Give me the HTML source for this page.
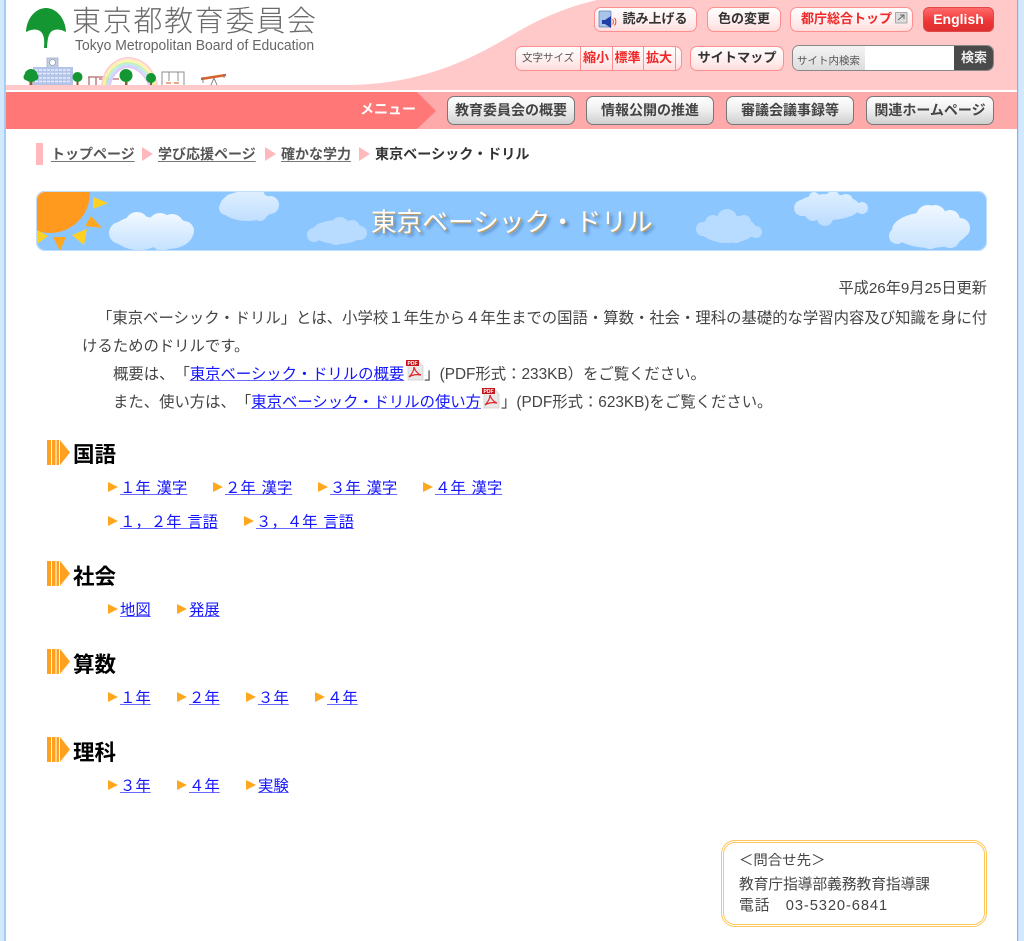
<!DOCTYPE html>
<html lang="ja"><head><meta charset="utf-8"><title>東京ベーシック・ドリル</title>
<style>
html,body{margin:0;padding:0;background:#fff}
body{width:1024px;height:941px;position:relative;overflow:hidden;font-family:"Liberation Sans","Noto Sans CJK JP",sans-serif;color:#444;text-spacing-trim:space-all}
.a{position:absolute}
.t{position:absolute;white-space:nowrap;line-height:1}
.b{position:absolute;box-sizing:border-box;border:1px solid #ff8f8f;border-radius:7px;background:linear-gradient(#fff,#ffeaea 70%,#ffdcdc);text-align:center;font-weight:bold;font-size:13px;line-height:21px;color:#333;white-space:nowrap}
.n{position:absolute;top:96px;height:29px;box-sizing:border-box;border:1px solid #777;border-radius:7px;background:linear-gradient(#fff,#eee 50%,#cfcfcf);text-align:center;font-weight:bold;font-size:14px;line-height:27px;color:#444;white-space:nowrap}
a{color:#1414ff;text-decoration:underline;text-decoration-color:#6a6aff}
.l{position:absolute;white-space:nowrap;line-height:1;font-size:15.36px;word-spacing:1.5px}
.tri{position:absolute;width:0;height:0;border-left:10px solid #ffa81f;border-top:5.5px solid transparent;border-bottom:5.5px solid transparent}
.crumb{position:absolute;top:147px;width:0;height:0;border-left:11px solid #ffb9bd;border-top:7.5px solid transparent;border-bottom:7.5px solid transparent}
.c{position:absolute;top:147px;font-size:14px;font-weight:bold;line-height:1;color:#555;white-space:nowrap;text-decoration:underline;text-decoration-color:#777;text-underline-offset:2px}
.h{position:absolute;left:73px;font-size:21.5px;font-weight:bold;line-height:1;color:#000;white-space:nowrap}
</style></head><body>

<svg class="a" style="left:0;top:0" width="1024" height="941" viewBox="0 0 1024 941">
<rect x="0" y="0" width="5" height="941" fill="#d2e8fc"/><rect x="4.5" y="0" width="1.2" height="941" fill="#7fb4ea"/>
<rect x="1018" y="0" width="6" height="941" fill="#d2e8fc"/><rect x="1017" y="0" width="1.2" height="941" fill="#7fb4ea"/>
<path d="M6 85H345C420 85 470 60 512 35C545 15 575 5 597 0H1017V90H6Z" fill="#ffc9c9"/>
<rect x="6" y="92" width="1011" height="37" fill="#ffaaaa"/>
<path d="M6 92H417L436 111L417 129H6Z" fill="#ff7777"/>
<!-- logo -->
<path d="M44 48C44.800 40 44 34 40 31C35 28 30 30 26 32C26.500 18 36 8 46 8C56 8 65.500 18 66 32C62 30 57 28 52 31C48 34 47.500 40 47 48Z" fill="#149632"/>
<!-- school -->
<g>
<rect x="47" y="58" width="11" height="10" fill="#c4cfe6" stroke="#99a7c8" stroke-width=".7"/><circle cx="52.500" cy="62.500" r="3" fill="#fff" stroke="#889" stroke-width=".6"/>
<rect x="33" y="67" width="40" height="18" fill="#b4c4e8"/>
<path d="M35 70h36M35 73.500h36M35 78h36M35 81.500h36" stroke="#e8eefa" stroke-width="1.500" stroke-dasharray="3 1"/>
<rect x="29.500" y="78" width="3" height="7" fill="#8a5a3a"/><circle cx="31" cy="75.500" r="6.500" fill="#149632"/><circle cx="27" cy="77" r="3.500" fill="#149632"/><circle cx="35" cy="77" r="3.500" fill="#149632"/>
<rect x="76.500" y="80" width="2" height="5" fill="#8a5a3a"/><circle cx="77.500" cy="77" r="5" fill="#149632"/>
<path d="M88 77h20M89 77v8M96 77v8M99 79h20M108 77v8" stroke="#b56a6a" stroke-width="1.300" fill="none"/>
<path d="M102 85C104 66 118 58 128 58C140 58 153 66 157 85" fill="none" stroke="#ffd0d0" stroke-width="2"/>
<path d="M104 85C106 68 118 60.500 128 60.500C139 60.500 151 68 155 85" fill="none" stroke="#fff3a0" stroke-width="2"/>
<path d="M106 85C108 70 119 63 128 63C138 63 149 70 153 85" fill="none" stroke="#c9f0b0" stroke-width="2"/>
<path d="M108 85C110 72 120 65 128 65C137 65 147 72 151 85" fill="none" stroke="#bfe0ff" stroke-width="2"/>
<path d="M110 85C112 74 120 67 128 67C136 67 145 74 149 85" fill="none" stroke="#e4c8f4" stroke-width="2"/>
<rect x="125" y="78" width="2.500" height="7" fill="#8a5a3a"/><circle cx="126" cy="75.500" r="6.500" fill="#149632"/>
<rect x="150" y="80" width="2" height="5" fill="#8a5a3a"/><circle cx="151" cy="78" r="5" fill="#149632"/>
<path d="M162 85V72H184V85M162 72h22M169 72v9M178 72v9" fill="none" stroke="#8c8c8c" stroke-width="1"/>
<path d="M166 83h5M174 83h5" stroke="#e07040" stroke-width="1.200"/>
<path d="M201 79L226 75" stroke="#d8622a" stroke-width="2.500"/><path d="M211 85L214 78L217 85M203 77v6M224 74v4" stroke="#777" stroke-width=".9" fill="none"/>
</g>
<!-- banner -->
<defs>
<clipPath id="bc"><rect x="36" y="191" width="951" height="60" rx="9"/></clipPath>
<linearGradient id="g1" gradientUnits="userSpaceOnUse" x1="0" y1="212" x2="0" y2="251"><stop offset="0" stop-color="#f2f9ff"/><stop offset="1" stop-color="#c4e1ff"/></linearGradient>
<linearGradient id="g2" gradientUnits="userSpaceOnUse" x1="0" y1="191" x2="0" y2="225"><stop offset="0" stop-color="#dff0ff"/><stop offset="1" stop-color="#bcdcff"/></linearGradient>
<linearGradient id="g6" gradientUnits="userSpaceOnUse" x1="0" y1="205" x2="0" y2="249"><stop offset="0" stop-color="#f0f8ff"/><stop offset="1" stop-color="#c8e3ff"/></linearGradient>
</defs>
<rect x="36" y="191" width="951" height="60" rx="9" fill="#8cc6ff"/>
<g clip-path="url(#bc)">
<circle cx="50" cy="193" r="40" fill="#ff9a1f"/>
<path d="M93 197L108 203L93 209Z" fill="#ffd01f"/>
<path d="M91 216L102 228L85 226Z" fill="#ffa81f"/>
<path d="M87 229L84 245L72 235Z" fill="#ffd01f"/>
<path d="M53 237H66L60 251Z" fill="#ffa81f"/>
<path d="M37 230L48 236L37 244Z" fill="#ffd01f"/>
<g fill="url(#g1)"><ellipse cx="139" cy="233" rx="27" ry="17"/><ellipse cx="168" cy="233" rx="25" ry="16"/><circle cx="137" cy="224" r="12"/><circle cx="160" cy="225" r="12"/><circle cx="172" cy="226" r="12"/><circle cx="120" cy="233" r="11"/><circle cx="184" cy="231" r="10"/><circle cx="138" cy="240" r="11"/><circle cx="162" cy="241" r="10"/></g>
<g fill="url(#g2)"><ellipse cx="247" cy="206" rx="27" ry="15"/><circle cx="226" cy="208" r="7"/><circle cx="231" cy="200" r="6"/><circle cx="241" cy="199" r="8"/><circle cx="256" cy="197" r="9"/><circle cx="270" cy="205" r="9"/><circle cx="260" cy="214" r="7"/><circle cx="243" cy="212" r="8"/></g>
<g fill="#b8dcff"><ellipse cx="338" cy="232" rx="26" ry="12"/><circle cx="314" cy="235" r="7"/><circle cx="321" cy="229" r="6"/><circle cx="340" cy="226" r="9"/><circle cx="352" cy="228" r="8"/><circle cx="360" cy="233" r="7"/><circle cx="336" cy="238" r="7"/></g>
<g fill="#b8dcff"><ellipse cx="728" cy="229" rx="28" ry="14"/><circle cx="703" cy="229" r="7"/><circle cx="713" cy="223" r="8"/><circle cx="727" cy="219" r="10"/><circle cx="744" cy="222" r="7"/><circle cx="756" cy="232" r="6"/><circle cx="722" cy="235" r="8"/><circle cx="736" cy="236" r="7"/></g>
<g fill="url(#g2)"><ellipse cx="828" cy="207" rx="32" ry="13"/><circle cx="802" cy="208" r="8"/><circle cx="814" cy="197" r="5"/><circle cx="833" cy="198" r="7"/><circle cx="846" cy="201" r="7"/><circle cx="862" cy="208" r="6"/><circle cx="825" cy="218" r="8"/><circle cx="813" cy="213" r="8"/></g>
<g fill="url(#g6)"><ellipse cx="930" cy="230" rx="38" ry="18"/><circle cx="928" cy="217" r="12"/><circle cx="935" cy="216" r="11"/><circle cx="950" cy="220" r="10"/><circle cx="960" cy="228" r="10"/><circle cx="897" cy="236" r="8"/><circle cx="910" cy="230" r="11"/><circle cx="930" cy="239" r="10"/><circle cx="950" cy="238" r="10"/></g>
</g>
<rect x="36.500" y="191.500" width="950" height="59" rx="9" fill="none" stroke="#c0deff" stroke-width="1"/>
<!-- heading marks -->
<g fill="#ffa020">
<path d="M47 440h4v25h-4zM52 440h3.500v25h-3.500zM56.500 440h2.500v25h-2.500zM60 440l10 12.500l-10 12.500z"/>
<path d="M47 561h4v25h-4zM52 561h3.500v25h-3.500zM56.500 561h2.500v25h-2.500zM60 561l10 12.500l-10 12.500z"/>
<path d="M47 649h4v25h-4zM52 649h3.500v25h-3.500zM56.500 649h2.500v25h-2.500zM60 649l10 12.500l-10 12.500z"/>
<path d="M47 737h4v25h-4zM52 737h3.500v25h-3.500zM56.500 737h2.500v25h-2.500zM60 737l10 12.500l-10 12.500z"/>
</g>
<!-- pdf icons -->
<g><path d="M408 361h10l5 5v14h-15z" fill="#e8e8e8" stroke="#ccc" stroke-width=".7"/><rect x="406" y="360" width="13" height="6" fill="#c4161c"/><text x="407.500" y="365" font-size="5" font-weight="bold" fill="#fff" font-family="Liberation Sans">PDF</text><path d="M414 367c0 4-2 7-5 10c3-2 7-3 12-2c-3-1-6-4-7-8z" fill="none" stroke="#e0242a" stroke-width="1.200"/></g>
<g><path d="M484 389h10l5 5v14h-15z" fill="#e8e8e8" stroke="#ccc" stroke-width=".7"/><rect x="482" y="388" width="13" height="6" fill="#c4161c"/><text x="483.500" y="393" font-size="5" font-weight="bold" fill="#fff" font-family="Liberation Sans">PDF</text><path d="M490 395c0 4-2 7-5 10c3-2 7-3 12-2c-3-1-6-4-7-8z" fill="none" stroke="#e0242a" stroke-width="1.200"/></g>
</svg>

<div class="t" style="left:72px;top:8px;font-size:29px;letter-spacing:1.700px;color:#6a6a6a;font-weight:300">東京都教育委員会</div>
<div class="t" style="left:75px;top:39px;font-size:14.500px;color:#666;transform:scaleX(.96);transform-origin:left center">Tokyo Metropolitan Board of Education</div>

<div class="b" style="left:594px;top:7px;width:103px;height:25px;padding-left:19px">読み上げる</div>
<div class="b" style="left:707px;top:7px;width:74px;height:25px">色の変更</div>
<div class="b" style="left:790px;top:7px;width:123px;height:25px;color:#f02828;text-align:left;padding-left:10px">都庁総合トップ</div>
<div class="a" style="left:923px;top:7px;width:71px;height:25px;border-radius:6px;background:linear-gradient(#ff6a6a,#ee3434 60%,#dd3030);color:#fff;font-weight:bold;font-size:14px;line-height:22px;text-align:center;box-sizing:border-box;border:1px solid #e04848">English</div>

<div class="b" style="left:515px;top:46px;width:167px;height:25px"></div>
<div class="a" style="left:580px;top:47px;width:1px;height:23px;background:#ff8f8f"></div>
<div class="a" style="left:612px;top:47px;width:1px;height:23px;background:#ff8f8f"></div>
<div class="a" style="left:643px;top:47px;width:1px;height:23px;background:#ff8f8f"></div>
<div class="a" style="left:675px;top:47px;width:1px;height:23px;background:#ff8f8f"></div>
<div class="t" style="left:522px;top:53px;font-size:10.500px;color:#555">文字サイズ</div>
<div class="t" style="left:583px;top:51px;font-size:13px;font-weight:bold;color:#f02828">縮小</div>
<div class="t" style="left:614.500px;top:51px;font-size:13px;font-weight:bold;color:#f02828">標準</div>
<div class="t" style="left:646px;top:51px;font-size:13px;font-weight:bold;color:#f02828">拡大</div>
<div class="b" style="left:690px;top:46px;width:94px;height:25px;font-size:13.200px">サイトマップ</div>
<div class="a" style="left:792px;top:45px;width:202px;height:26px;box-sizing:border-box;border:1px solid #888;border-radius:7px;background:#fff;overflow:hidden">
  <div class="a" style="left:0;top:0;width:72px;height:24px;background:linear-gradient(#f4f4f4,#ddd)"></div>
  <div class="a" style="left:161px;top:0;width:40px;height:24px;background:#4a4a4a;color:#eee;font-weight:bold;font-size:13px;line-height:23px;text-align:center">検索</div>
  <div class="t" style="left:4px;top:10px;font-size:10.500px;color:#555">サイト内検索</div>
</div>

<!-- icons over buttons -->
<svg class="a" style="left:590px;top:0" width="330" height="40" viewBox="590 0 330 40">
<rect x="599" y="11" width="12" height="16" rx="1" fill="#a9c4e8" stroke="#5a7fb8" stroke-width=".7"/>
<path d="M602 20h3l6-4v12l-6-4h-3z" fill="#1f3fa8"/>
<path d="M612.500 19c1.200 1.500 1.200 4 0 5.500M614.500 18c1.800 2 1.800 5.500 0 7.500" stroke="#e8502a" stroke-width="1" fill="none"/>
<rect x="895.500" y="12.500" width="11.500" height="10.500" fill="#ddd" stroke="#999" stroke-width=".8"/>
<path d="M898 20l6-5M900 15h4v4" stroke="#666" stroke-width="1" fill="none"/>
</svg>

<div class="t" style="left:360px;top:102px;font-size:14px;font-weight:bold;color:#fff">メニュー</div>
<div class="n" style="left:447px;width:128px">教育委員会の概要</div>
<div class="n" style="left:586px;width:128px">情報公開の推進</div>
<div class="n" style="left:726px;width:128px">審議会議事録等</div>
<div class="n" style="left:866px;width:128px">関連ホームページ</div>

<div class="a" style="left:36px;top:143px;width:7px;height:22px;background:#ffb9bd"></div>
<div class="c" style="left:51px">トップページ</div><div class="crumb" style="left:142px"></div>
<div class="c" style="left:158px">学び応援ページ</div><div class="crumb" style="left:265px"></div>
<div class="c" style="left:281px">確かな学力</div><div class="crumb" style="left:359px"></div>
<div class="t" style="left:375px;top:147px;font-size:14.100px;font-weight:bold;color:#333">東京ベーシック・ドリル</div>

<div class="t" style="left:371px;top:211px;font-size:25.700px;color:#fff;text-shadow:1px 1px 1px #c89a50,3px 3px 3px #4a80c0">東京ベーシック・ドリル</div>

<div class="t" style="right:37px;top:281px;font-size:15.200px">平成26年9月25日更新</div>
<div class="t" style="left:97px;top:311px;font-size:15.360px">「東京ベーシック・ドリル」とは、小学校１年生から４年生までの国語・算数・社会・理科の基礎的な学習内容及び知識を身に付</div>
<div class="t" style="left:82px;top:339px;font-size:15.360px">けるためのドリルです。</div>
<div class="t" style="left:113px;top:367px;font-size:15.360px">概要は、「<a>東京ベーシック・ドリルの概要</a><span style="display:inline-block;width:20px"></span>」(PDF形式：233KB）をご覧ください。</div>
<div class="t" style="left:113px;top:395px;font-size:15.360px">また、使い方は、「<a>東京ベーシック・ドリルの使い方</a><span style="display:inline-block;width:20px"></span>」(PDF形式：623KB)をご覧ください。</div>

<div class="h" style="top:445px">国語</div>
<div class="tri" style="left:108px;top:482px"></div><a class="l" style="left:120px;top:481px">１年 漢字</a>
<div class="tri" style="left:213px;top:482px"></div><a class="l" style="left:225px;top:481px">２年 漢字</a>
<div class="tri" style="left:318px;top:482px"></div><a class="l" style="left:330px;top:481px">３年 漢字</a>
<div class="tri" style="left:423px;top:482px"></div><a class="l" style="left:435px;top:481px">４年 漢字</a>
<div class="tri" style="left:108px;top:516px"></div><a class="l" style="left:120px;top:515px">１，２年 言語</a>
<div class="tri" style="left:244px;top:516px"></div><a class="l" style="left:256px;top:515px">３，４年 言語</a>

<div class="h" style="top:567px">社会</div>
<div class="tri" style="left:108px;top:604px"></div><a class="l" style="left:120px;top:603px">地図</a>
<div class="tri" style="left:177px;top:604px"></div><a class="l" style="left:189px;top:603px">発展</a>

<div class="h" style="top:655px">算数</div>
<div class="tri" style="left:108px;top:692px"></div><a class="l" style="left:120px;top:691px">１年</a>
<div class="tri" style="left:177px;top:692px"></div><a class="l" style="left:189px;top:691px">２年</a>
<div class="tri" style="left:246px;top:692px"></div><a class="l" style="left:258px;top:691px">３年</a>
<div class="tri" style="left:315px;top:692px"></div><a class="l" style="left:327px;top:691px">４年</a>

<div class="h" style="top:743px">理科</div>
<div class="tri" style="left:108px;top:780px"></div><a class="l" style="left:120px;top:779px">３年</a>
<div class="tri" style="left:177px;top:780px"></div><a class="l" style="left:189px;top:779px">４年</a>
<div class="tri" style="left:246px;top:780px"></div><a class="l" style="left:258px;top:779px">実験</a>

<div class="a" style="left:721px;top:840px;width:266px;height:87px;box-sizing:border-box;border:3px double #ffc65c;border-radius:14px"></div>
<div class="t" style="left:739px;top:854px;font-size:14.400px">＜問合せ先＞</div>
<div class="t" style="left:739px;top:878px;font-size:14.700px">教育庁指導部義務教育指導課</div>
<div class="t" style="left:739px;top:899px;font-size:14.700px;letter-spacing:.9px">電話　03-5320-6841</div>
</body></html>
